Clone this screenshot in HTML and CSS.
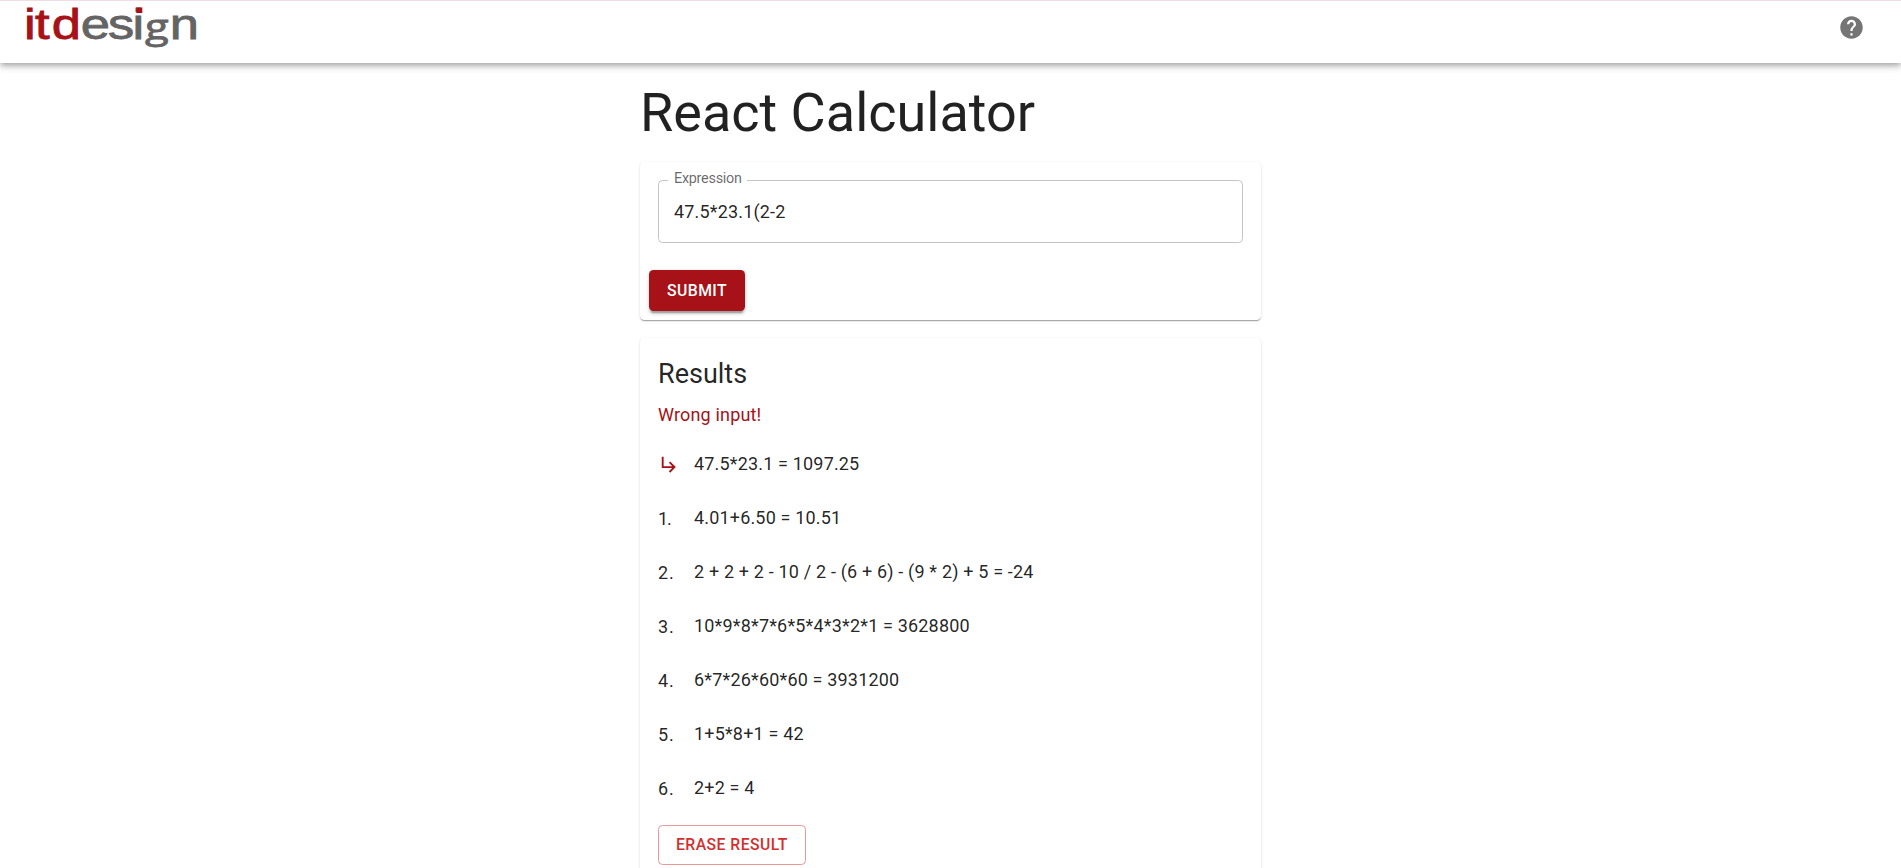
FILE: index.html
```html
<!DOCTYPE html>
<html lang="en">
<head>
<meta charset="utf-8">
<title>React Calculator</title>
<link rel="stylesheet" href="styles.css">
</head>
<body>
<header class="appbar">
  <svg class="logo" width="200" height="56" viewBox="0 0 200 56" role="img" aria-label="itdesign">
    <g transform="scale(1.25 1)">
      <text class="logo-text" y="39"><tspan class="logo-red" x="19.2">i</tspan><tspan class="logo-red" x="28">t</tspan><tspan class="logo-red" x="41.5">d</tspan><tspan class="logo-grey" x="64.7">e</tspan><tspan class="logo-grey" x="86.4">s</tspan><tspan class="logo-grey" x="106">i</tspan><tspan class="logo-grey logo-g" x="116">g</tspan><tspan class="logo-grey" x="135.900">n</tspan></text>
    </g>
    <rect class="logo-dot" x="136.3" y="7.500" width="6" height="5.500"/>
  </svg>
  <svg class="help" viewBox="0 0 24 24"><path d="M12 2C6.48 2 2 6.48 2 12s4.48 10 10 10 10-4.480 10-10S17.520 2 12 2zm1 17h-2v-2h2v2zm2.070-7.750-.9.920C13.450 12.900 13 13.500 13 15h-2v-.5c0-1.100.450-2.100 1.170-2.830l1.240-1.260c.370-.360.590-.860.590-1.410 0-1.100-.9-2-2-2s-2 .9-2 2H8c0-2.210 1.790-4 4-4s4 1.790 4 4c0 .880-.360 1.680-.930 2.250z"/></svg>
</header>
<main class="container">
  <h1 class="title">React Calculator</h1>
  <section class="card form-card">
    <fieldset class="field">
      <legend class="label">Expression</legend>
      <div class="value">47.5*23.1(2-2</div>
    </fieldset>
    <button class="btn submit">SUBMIT</button>
  </section>
  <section class="card results-card">
    <h2 class="subtitle">Results</h2>
    <p class="error">Wrong input!</p>
    <ul class="list">
      <li class="row"><span class="lead"><svg class="arrow" viewBox="0 0 24 24"><path d="m19 15-6 6-1.420-1.420L15.170 16H4V4h2v10h9.170l-3.590-3.580L13 9l6 6z"/></svg></span><span>47.5*23.1 = 1097.25</span></li>
      <li class="row"><span class="lead lead-one">1.</span><span>4.01+6.50 = 10.51</span></li>
      <li class="row"><span class="lead">2.</span><span>2 + 2 + 2 - 10 / 2 - (6 + 6) - (9 * 2) + 5 = -24</span></li>
      <li class="row"><span class="lead">3.</span><span>10*9*8*7*6*5*4*3*2*1 = 3628800</span></li>
      <li class="row"><span class="lead">4.</span><span>6*7*26*60*60 = 3931200</span></li>
      <li class="row"><span class="lead">5.</span><span>1+5*8+1 = 42</span></li>
      <li class="row"><span class="lead">6.</span><span>2+2 = 4</span></li>
    </ul>
    <button class="btn erase">ERASE RESULT</button>
  </section>
</main>
</body>
</html>
```
FILE: styles.css
```css
* { box-sizing: border-box; }
html { height: 100%; overflow: hidden; }
body {
  margin: 0;
  height: 100%;
  overflow: hidden;
  background: #fff;
  color: rgba(0, 0, 0, 0.87);
  font: 400 18px/27px Roboto, sans-serif;
  letter-spacing: 0.00938em;
}
.appbar {
  position: relative;
  display: flex;
  justify-content: space-between;
  align-items: flex-start;
  height: 63px;
  padding-right: 36px;
  border-top: 1px solid #f0dce2;
  background: #fff;
  box-shadow: 0 2.25px 4.5px -1px rgba(0, 0, 0, 0.2), 0 4.5px 5.6px 0 rgba(0, 0, 0, 0.14), 0 1px 11px 0 rgba(0, 0, 0, 0.12);
}
.logo { display: block; margin-top: -1px; overflow: visible; }
.logo-text {
  font-family: "Liberation Sans", sans-serif;
  font-size: 42px;
  letter-spacing: 0;
  stroke-width: 0.8px;
}
.logo-red { fill: #a61217; stroke: #a61217; }
.logo-grey { fill: #646464; stroke: #646464; }
.logo-g { font-family: "Open Sans", sans-serif; font-size: 35px; }
.logo-dot { fill: #a61217; }
.help { width: 27px; height: 27px; margin-top: 13px; fill: #757575; }
.container { width: 621px; margin: 0 auto; padding-top: 18px; }
.title { margin: 0 0 18px; font-size: 54px; font-weight: 400; line-height: 63px; letter-spacing: 0; }
.card {
  border-radius: 4.5px;
  background: #fff;
  box-shadow: 0 2px 1px -1px rgba(0, 0, 0, 0.2), 0 1px 1px 0 rgba(0, 0, 0, 0.14), 0 1px 3px 0 rgba(0, 0, 0, 0.12);
}
.form-card { height: 158px; padding: 10px 18px 9px; margin-bottom: 18px; }
.field {
  height: 71px;
  margin: 0 0 27px;
  padding: 0 15px;
  border: 1px solid #c4c4c4;
  border-radius: 4.5px;
}
.label {
  height: 17px;
  margin-left: -6px;
  padding: 0 5px 0 6px;
  color: rgba(0, 0, 0, 0.6);
  font-size: 14.4px;
  line-height: 13px;
  letter-spacing: -0.26px;
}
.value { padding-top: 9px; }
.btn {
  display: block;
  border-radius: 4.5px;
  font: 500 15.75px/27px Roboto, sans-serif;
  letter-spacing: 0.02857em;
}
.submit {
  height: 41px;
  margin-left: -9px;
  padding: 7px 18px;
  border: 0;
  background: #a61217;
  color: #fff;
  box-shadow: 0 3.4px 1.1px -2.2px rgba(0, 0, 0, 0.2), 0 2.2px 2.2px 0 rgba(0, 0, 0, 0.14), 0 1.1px 5.6px 0 rgba(0, 0, 0, 0.12);
}
.results-card { padding: 18px; }
.subtitle { margin: 0; font-size: 27px; font-weight: 400; line-height: 36px; letter-spacing: 0; }
.error { margin: 9px 0 8px; color: #a61217; }
.list { margin: 0; padding: 0; list-style: none; }
.row { display: flex; align-items: center; height: 54.1px; }
.lead { display: flex; width: 36px; padding-top: 2px; letter-spacing: 0.8px; }
.lead-one { letter-spacing: -1.2px; }
.arrow { width: 22.5px; height: 22.5px; fill: #a61217; }
.erase { height: 40px; margin-top: 10px; padding: 5.5px 17px; border: 1px solid #ea9797; background: #fff; color: #d32f2f; }
```
